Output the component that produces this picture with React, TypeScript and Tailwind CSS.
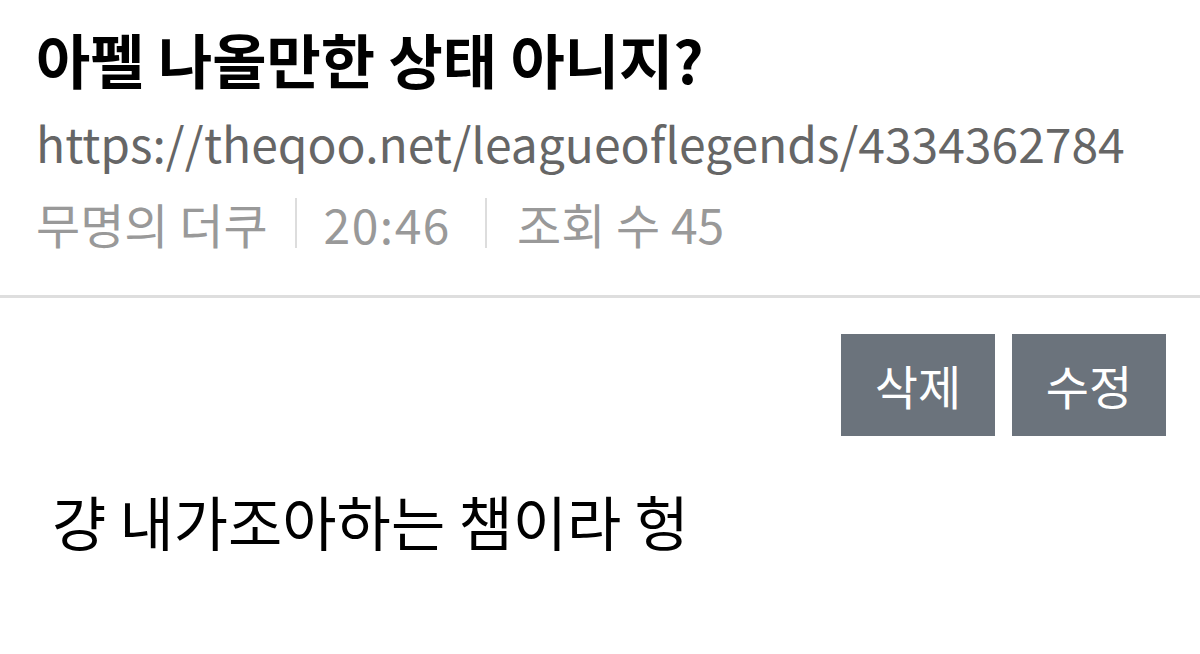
import React from 'react';

const font = "font-['Noto_Sans_CJK_KR','Noto_Sans',sans-serif]";

const PostHeader: React.FC = () => (
  <div className="px-[36px] pt-[19px] pb-[34px] border-b-[3px] border-[#dedede]">
    <h1 className="text-[59px] leading-[80px] font-bold text-black">아펠 나올만한 상태 아니지?</h1>
    <p className="text-[48px] leading-[86px] text-[#666666]">https://theqoo.net/leagueoflegends/4334362784</p>
    <div className="flex items-center text-[48px] leading-[76px] text-[#999999]">
      <span>무명의 더쿠</span>
      <span className="w-[2px] h-[50px] bg-[#dddddd] mx-[27px]" />
      <span className="tracking-[1.5px]">20:46</span>
      <span className="w-[2px] h-[50px] bg-[#dddddd] ml-[34px] mr-[30px]" />
      <span>조회 수 45</span>
    </div>
  </div>
);

const App: React.FC = () => {
  return (
    <div className={`w-[1200px] h-[654px] bg-white overflow-hidden ${font}`}>
      <PostHeader />
      <div className="flex justify-end gap-[17px] pr-[34px] pt-[36px]">
        <button className="w-[154px] h-[102px] bg-[#6b737c] text-white text-[47px]">삭제</button>
        <button className="w-[154px] h-[102px] bg-[#6b737c] text-white text-[47px]">수정</button>
      </div>
      <div className="px-[52px] pt-[45px] text-[59px] leading-[80px] text-black">걍 내가조아하는 챔이라 헝</div>
    </div>
  );
};

export default App;
